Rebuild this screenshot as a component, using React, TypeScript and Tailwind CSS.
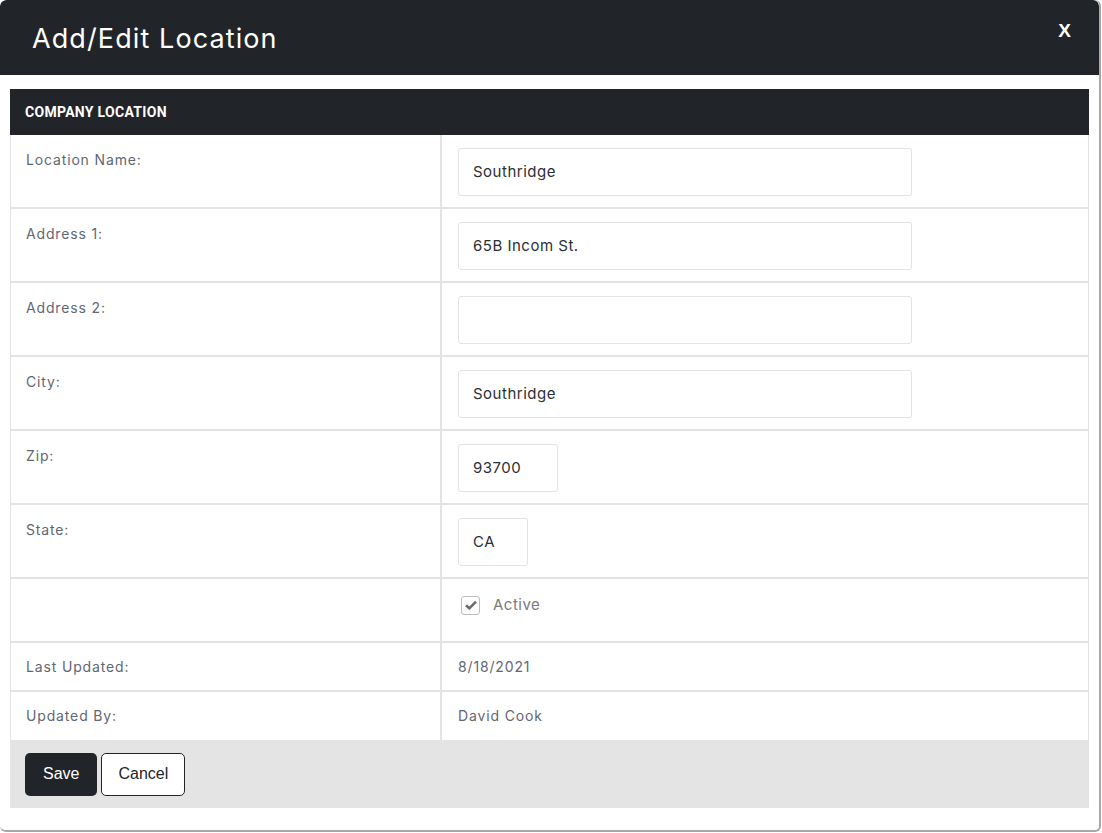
import React from 'react';

interface Row {
  label: string;
  value?: string;
  width?: string;
  kind: 'input' | 'check' | 'text';
}

const rows: Row[] = [
  { label: 'Location Name:', value: 'Southridge', width: 'w-[454px]', kind: 'input' },
  { label: 'Address 1:', value: '65B Incom St.', width: 'w-[454px]', kind: 'input' },
  { label: 'Address 2:', value: '', width: 'w-[454px]', kind: 'input' },
  { label: 'City:', value: 'Southridge', width: 'w-[454px]', kind: 'input' },
  { label: 'Zip:', value: '93700', width: 'w-[100px]', kind: 'input' },
  { label: 'State:', value: 'CA', width: 'w-[70px]', kind: 'input' },
  { label: '', kind: 'check' },
  { label: 'Last Updated:', value: '8/18/2021', kind: 'text' },
  { label: 'Updated By:', value: 'David Cook', kind: 'text' },
];

function FieldRow({ row }: { row: Row }) {
  const tall = row.kind === 'input';
  return (
    <div
      className={`grid grid-cols-[431px_1fr] border-b-2 border-[#e3e3e3] last:border-b-0 ${
        tall ? 'h-[74px]' : row.kind === 'check' ? 'h-[64px]' : 'h-[49px]'
      }`}
    >
      <div
        className={`border-r-2 border-[#e3e3e3] pl-[15px] text-[14px] tracking-[0.85px] text-[#5f6773] ${
          row.kind === 'text' ? 'pt-[13px]' : 'pt-[14px]'
        }`}
      >
        {row.label}
      </div>
      <div className="px-[16px]">
        {row.kind === 'input' && (
          <div
            className={`${row.width} mt-[13px] flex h-[48px] items-center rounded-[3px] border border-[#e3e3e3] px-[14px] text-[15px] tracking-[0.5px] text-[#2b2f33]`}
          >
            {row.value}
          </div>
        )}
        {row.kind === 'check' && (
          <div className="mt-[15px] flex items-center gap-[13px]">
            <span className="ml-[3px] flex h-[19px] w-[19px] items-center justify-center rounded-[3px] border border-[#bdbdbd] bg-white">
              <svg width="12" height="10" viewBox="0 0 12 10">
                <path d="M1 5.2 L4.3 8.3 L11 1.6" fill="none" stroke="#6b6b6b" strokeWidth="2.6" />
              </svg>
            </span>
            <span className="text-[15px] tracking-[0.5px] text-[#7a7a7a]">Active</span>
          </div>
        )}
        {row.kind === 'text' && (
          <div className="pt-[13px] text-[14px] tracking-[0.85px] text-[#5f6773]">{row.value}</div>
        )}
      </div>
    </div>
  );
}

export default function App() {
  return (
    <div className="h-[833px] w-[1102px] bg-white font-['Inter','Open_Sans',sans-serif]">
      <div className="h-[832px] w-[1101px] overflow-hidden rounded-[6px] border-r-2 border-b-2 border-[#a8a8a8] bg-white">
        <div className="flex h-[75px] items-start justify-between rounded-t-[6px] bg-[#212529] pl-[32px] pr-[28px]">
          <h1 className="mt-[19px] text-[27px] font-normal tracking-[1.1px] text-white">Add/Edit Location</h1>
          <span className="mt-[17px] font-['Liberation_Sans',sans-serif] text-[19px] font-bold text-white">X</span>
        </div>
        <div className="px-[10px] pt-[14px]">
          <div className="flex h-[46px] items-center bg-[#212529] px-[15px] font-['Roboto',sans-serif] text-[14px] font-bold tracking-[0.3px] text-white">
            COMPANY LOCATION
          </div>
          <div className="border-x border-[#e3e3e3]">
            {rows.map((r, i) => (
              <FieldRow key={i} row={r} />
            ))}
          </div>
          <div className="-mt-[1px] flex h-[68px] items-center gap-[4px] bg-[#e4e4e4] px-[15px]">
            <button className="h-[43px] rounded-[5px] bg-[#212529] px-[18px] font-['Liberation_Sans',sans-serif] text-[16px] text-white">
              Save
            </button>
            <button className="h-[43px] rounded-[5px] border border-[#212529] bg-white px-[16px] font-['Liberation_Sans',sans-serif] text-[16px] text-[#212529]">
              Cancel
            </button>
          </div>
        </div>
      </div>
    </div>
  );
}
